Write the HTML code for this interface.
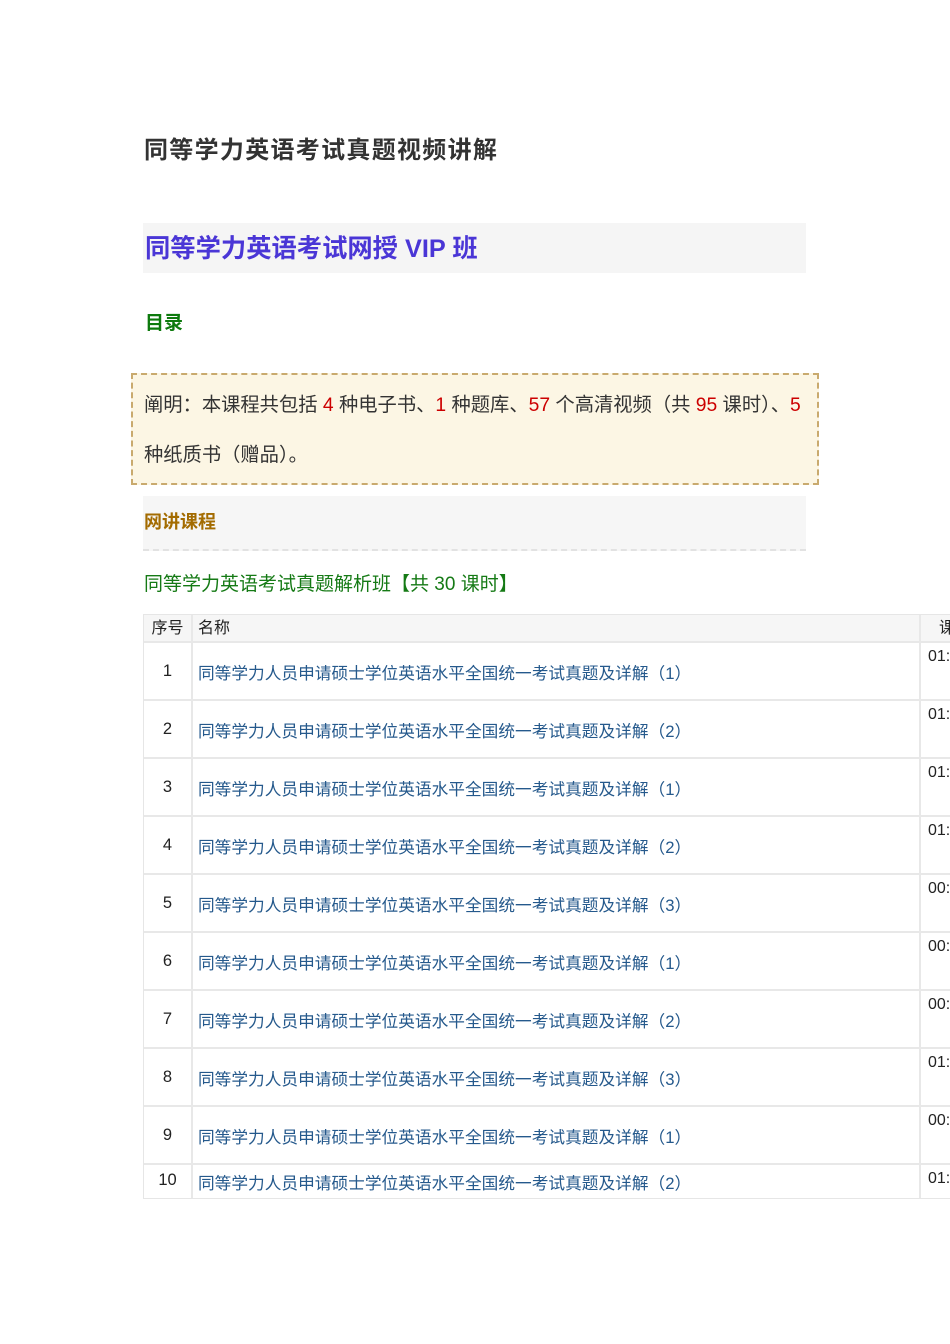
<!DOCTYPE html>
<html><head><meta charset="utf-8">
<style>
html,body{margin:0;padding:0;width:950px;height:1344px;overflow:hidden;background:#fff;}
body{font-family:"Liberation Sans","Noto Sans CJK SC",sans-serif;position:relative;}
.abs{position:absolute;white-space:nowrap;}
.t1{left:144px;top:135px;font-size:24px;font-weight:bold;color:#333;letter-spacing:1.3px;line-height:32px;}
.vip{left:143px;top:223px;width:663px;height:50px;background:#f5f5f5;}
.vip span{position:absolute;left:2px;top:10px;font-size:25.3px;font-weight:bold;color:#4a36d6;line-height:32px;}
.ml{left:145px;top:311px;font-size:19px;font-weight:bold;color:#0d7a0d;line-height:26px;}
.note{left:131px;top:373px;width:684px;height:108px;background:#fcf6e4;border:2px dashed #c9aa6e;}
.note p{margin:0;position:absolute;left:11px;font-size:19.3px;color:#333;line-height:26px;white-space:nowrap;}
.r{color:#c00;}
.wj{left:143px;top:496px;width:663px;height:53px;background:#f6f6f6;border-bottom:2px dashed #e2e2e2;}
.wj span{position:absolute;left:1px;top:13px;font-size:18px;font-weight:bold;color:#a36b00;line-height:26px;}
.sub{left:144px;top:571px;font-size:19px;color:#157a15;line-height:28px;}
.tbl{left:143px;top:614px;width:820px;height:583px;border:1px solid #e6e6e6;border-right:none;}
.hd{position:absolute;left:0;top:0;width:820px;height:26px;background:#f6f6f6;border-bottom:2px solid #e8e8e8;}
.row{position:absolute;left:0;width:820px;border-bottom:2px solid #e8e8e8;}
.c1{position:absolute;left:0;width:47px;text-align:center;font-size:16.5px;color:#222;}
.c2{position:absolute;left:54px;font-size:16.7px;color:#25598c;}
.c3{position:absolute;left:784px;font-size:16px;color:#222;}
.v1{position:absolute;left:47px;top:0;width:2px;height:583px;background:#e8e8e8;}
.v2{position:absolute;left:775px;top:0;width:2px;height:583px;background:#e8e8e8;}
</style></head><body>
<div class="abs t1">同等学力英语考试真题视频讲解</div>
<div class="abs vip"><span>同等学力英语考试网授 VIP 班</span></div>
<div class="abs ml">目录</div>
<div class="abs note">
<p style="top:18px;">阐明：本课程共包括 <span class="r">4</span> 种电子书、<span class="r">1</span> 种题库、<span class="r">57</span> 个高清视频（共 <span class="r">95</span> 课时）、<span class="r">5</span></p>
<p style="top:68px;">种纸质书（赠品）。</p>
</div>
<div class="abs wj"><span>网讲课程</span></div>
<div class="abs sub">同等学力英语考试真题解析班【共 30 课时】</div>
<div class="abs tbl">
<div class="hd">
<span class="c1" style="top:3px;line-height:22px;font-size:16px;">序号</span>
<span class="c2" style="top:3px;line-height:22px;color:#222;font-size:16px;">名称</span>
<span class="c3" style="top:3px;line-height:22px;left:795px;">课时</span>
</div>
<div class="row" style="top:28px;height:56px;"><span class="c1" style="top:19px;">1</span><span class="c2" style="top:17px;">同等学力人员申请硕士学位英语水平全国统一考试真题及详解（1）</span><span class="c3" style="top:5px;">01:00:00</span></div>
<div class="row" style="top:86px;height:56px;"><span class="c1" style="top:19px;">2</span><span class="c2" style="top:17px;">同等学力人员申请硕士学位英语水平全国统一考试真题及详解（2）</span><span class="c3" style="top:5px;">01:00:00</span></div>
<div class="row" style="top:144px;height:56px;"><span class="c1" style="top:19px;">3</span><span class="c2" style="top:17px;">同等学力人员申请硕士学位英语水平全国统一考试真题及详解（1）</span><span class="c3" style="top:5px;">01:00:00</span></div>
<div class="row" style="top:202px;height:56px;"><span class="c1" style="top:19px;">4</span><span class="c2" style="top:17px;">同等学力人员申请硕士学位英语水平全国统一考试真题及详解（2）</span><span class="c3" style="top:5px;">01:00:00</span></div>
<div class="row" style="top:260px;height:56px;"><span class="c1" style="top:19px;">5</span><span class="c2" style="top:17px;">同等学力人员申请硕士学位英语水平全国统一考试真题及详解（3）</span><span class="c3" style="top:5px;">00:50:00</span></div>
<div class="row" style="top:318px;height:56px;"><span class="c1" style="top:19px;">6</span><span class="c2" style="top:17px;">同等学力人员申请硕士学位英语水平全国统一考试真题及详解（1）</span><span class="c3" style="top:5px;">00:50:00</span></div>
<div class="row" style="top:376px;height:56px;"><span class="c1" style="top:19px;">7</span><span class="c2" style="top:17px;">同等学力人员申请硕士学位英语水平全国统一考试真题及详解（2）</span><span class="c3" style="top:5px;">00:50:00</span></div>
<div class="row" style="top:434px;height:56px;"><span class="c1" style="top:19px;">8</span><span class="c2" style="top:17px;">同等学力人员申请硕士学位英语水平全国统一考试真题及详解（3）</span><span class="c3" style="top:5px;">01:00:00</span></div>
<div class="row" style="top:492px;height:56px;"><span class="c1" style="top:19px;">9</span><span class="c2" style="top:17px;">同等学力人员申请硕士学位英语水平全国统一考试真题及详解（1）</span><span class="c3" style="top:5px;">00:50:00</span></div>
<div class="row" style="top:550px;height:31px;border-bottom:none;"><span class="c1" style="top:6px;">10</span><span class="c2" style="top:5px;">同等学力人员申请硕士学位英语水平全国统一考试真题及详解（2）</span><span class="c3" style="top:5px;">01:00:00</span></div>
<div class="v1"></div><div class="v2"></div>
</div>
</body></html>
